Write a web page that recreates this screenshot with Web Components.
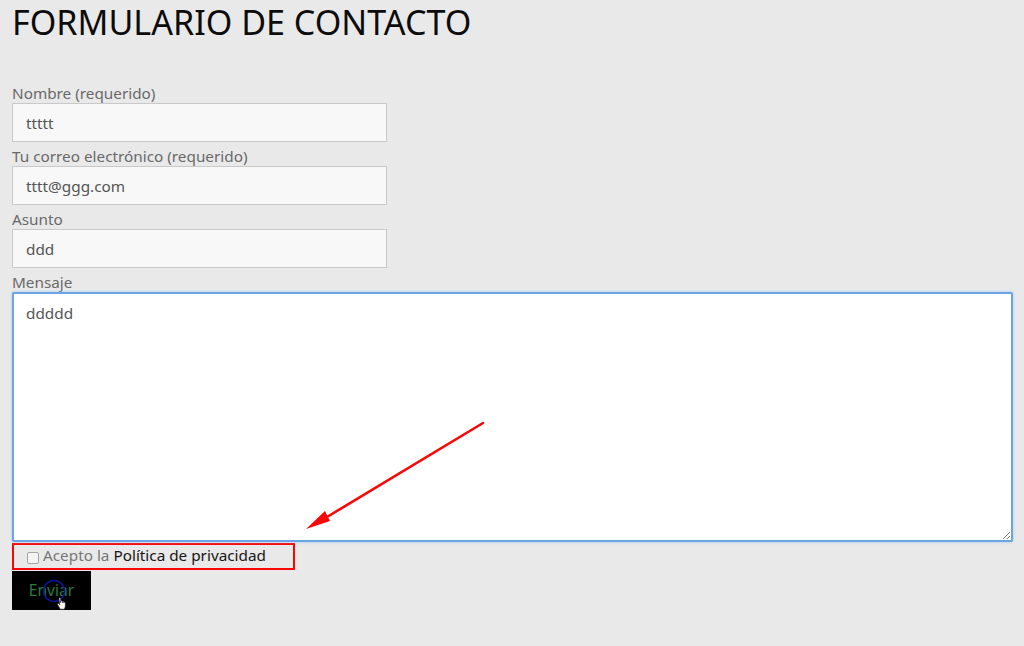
<!DOCTYPE html>
<html lang="es">
<head>
    <meta charset="UTF-8">
    <title>Formulario de contacto</title>
    <style>
        html,body{ margin:0; height:100%; }
        body{
            background:#e9e9e9;
            font-family:"Noto Sans","Open Sans",sans-serif;
            overflow:hidden;
        }
    </style>
</head>
<body>
    <contact-page>
        <span slot="title">FORMULARIO DE CONTACTO</span>
        <form-field label="Nombre (requerido)">ttttt</form-field>
        <form-field label="Tu correo electrónico (requerido)">tttt@ggg.com</form-field>
        <form-field label="Asunto">ddd</form-field>
        <form-message label="Mensaje">ddddd</form-message>
        <privacy-check>Política de privacidad</privacy-check>
        <send-button>Enviar</send-button>
    </contact-page>

    <template id="page">
        <style>
            :host{
                display:block;
                position:relative;
                height:646px;
                box-sizing:border-box;
                padding:0 11px 0 12px;
            }
            h1{
                margin:0;
                height:80px;
                padding-top:1px;
                box-sizing:border-box;
                font-size:34.1px;
                line-height:42px;
                font-weight:400;
                color:#0c0c0c;
            }
            .form{ display:flex; flex-direction:column; }
            svg{ position:absolute; left:300px; top:415px; }
        </style>
        <h1><slot name="title"></slot></h1>
        <div class="form"><slot></slot></div>
        <svg width="190" height="120" viewBox="0 0 190 120">
            <line x1="183" y1="8" x2="22" y2="105" stroke="#fb0606" stroke-width="2.6" stroke-linecap="round"/>
            <polygon points="6,114 25,96 30,106" fill="#fb0606"/>
        </svg>
    </template>

    <template id="field">
        <style>
            :host{ display:block; height:63px; }
            .lbl{ display:block; height:23px; font-size:15.3px; line-height:27px; color:#6a6a6a; }
            .box{
                box-sizing:border-box;
                width:375px;
                height:39px;
                padding:0 13px;
                background:#f8f8f8;
                border:1px solid #c9c9c9;
                font-size:15.3px;
                line-height:38px;
                color:#555;
            }
        </style>
        <span class="lbl"></span>
        <div class="box"><slot></slot></div>
    </template>

    <template id="message">
        <style>
            :host{ display:block; }
            .lbl{ display:block; height:23px; font-size:15.3px; line-height:27px; color:#6a6a6a; }
            .box{
                position:relative;
                box-sizing:border-box;
                height:250px;
                padding:6px 12px;
                background:#fff;
                border:2px solid #6ba5e6;
                border-radius:2px;
                box-shadow:0 0 3px #9cc6f4;
                font-size:15.3px;
                line-height:26px;
                color:#555;
            }
            svg{ position:absolute; right:0; bottom:0; }
        </style>
        <span class="lbl"></span>
        <div class="box">
            <slot></slot>
            <svg width="9" height="9" viewBox="0 0 9 9">
                <path d="M1 8L8 1M5 8L8 5" stroke="#888" stroke-width="1" fill="none"/>
            </svg>
        </div>
    </template>

    <template id="check">
        <style>
            :host{
                display:block;
                box-sizing:border-box;
                width:283px;
                height:27px;
                margin-top:1px;
                border:2px solid #fb0606;
                font-size:15.3px;
            }
            .row{ display:flex; align-items:center; height:19px; padding-left:13px; gap:4px; }
            i{
                box-sizing:border-box;
                width:12px;
                height:12px;
                margin-top:6px;
                background:#f4f4f4;
                border:1px solid #a5a5a5;
                border-radius:2px;
            }
            .txt{ color:#777; white-space:nowrap; }
            .txt b{ font-weight:400; color:#161616; }
        </style>
        <div class="row"><i></i><span class="txt">Acepto la <b><slot></slot></b></span></div>
    </template>

    <template id="send">
        <style>
            :host{
                display:block;
                position:relative;
                width:79px;
                height:39px;
                margin-top:1px;
                background:#000;
                color:#2a7a48;
                font-size:15.6px;
                line-height:39px;
                text-align:center;
            }
            svg{ position:absolute; left:0; top:0; }
        </style>
        <slot></slot>
        <svg width="79" height="39" viewBox="0 0 79 39">
            <circle cx="42" cy="20" r="10.5" fill="none" stroke="#0c1490" stroke-width="1.6"/>
            <path d="M47 27.5c0-1 1.6-1 1.6 0v4.2l.2-1.5c.1-.9 1.4-.8 1.4.1l.1 1.4.2-1c.2-.8 1.3-.7 1.3.2l.1 1.2.2-.6c.3-.7 1.2-.5 1.2.3v3.2c0 1.5-.7 2.5-1.1 3.2h-3.9l-2.7-4.6c-.4-.8.6-1.4 1.2-.8l.9 1z" fill="#fff" stroke="#222" stroke-width=".6"/>
        </svg>
    </template>

    <script>
        function stamp(host, id){
            const shadow = host.attachShadow({mode:'open'});
            shadow.appendChild(document.getElementById(id).content.cloneNode(true));
            return shadow;
        }
        class ContactPage extends HTMLElement{
            constructor(){ super(); stamp(this,'page'); }
        }
        class FormField extends HTMLElement{
            constructor(){ super(); this.tpl = 'field'; }
            connectedCallback(){
                if(this.shadowRoot) return;
                const shadow = stamp(this,this.tpl);
                shadow.querySelector('.lbl').textContent = this.getAttribute('label');
            }
        }
        class FormMessage extends FormField{
            constructor(){ super(); this.tpl = 'message'; }
        }
        class PrivacyCheck extends HTMLElement{
            constructor(){ super(); stamp(this,'check'); }
        }
        class SendButton extends HTMLElement{
            constructor(){ super(); stamp(this,'send'); }
        }
        customElements.define('contact-page',ContactPage);
        customElements.define('form-field',FormField);
        customElements.define('form-message',FormMessage);
        customElements.define('privacy-check',PrivacyCheck);
        customElements.define('send-button',SendButton);
    </script>
</body>
</html>
